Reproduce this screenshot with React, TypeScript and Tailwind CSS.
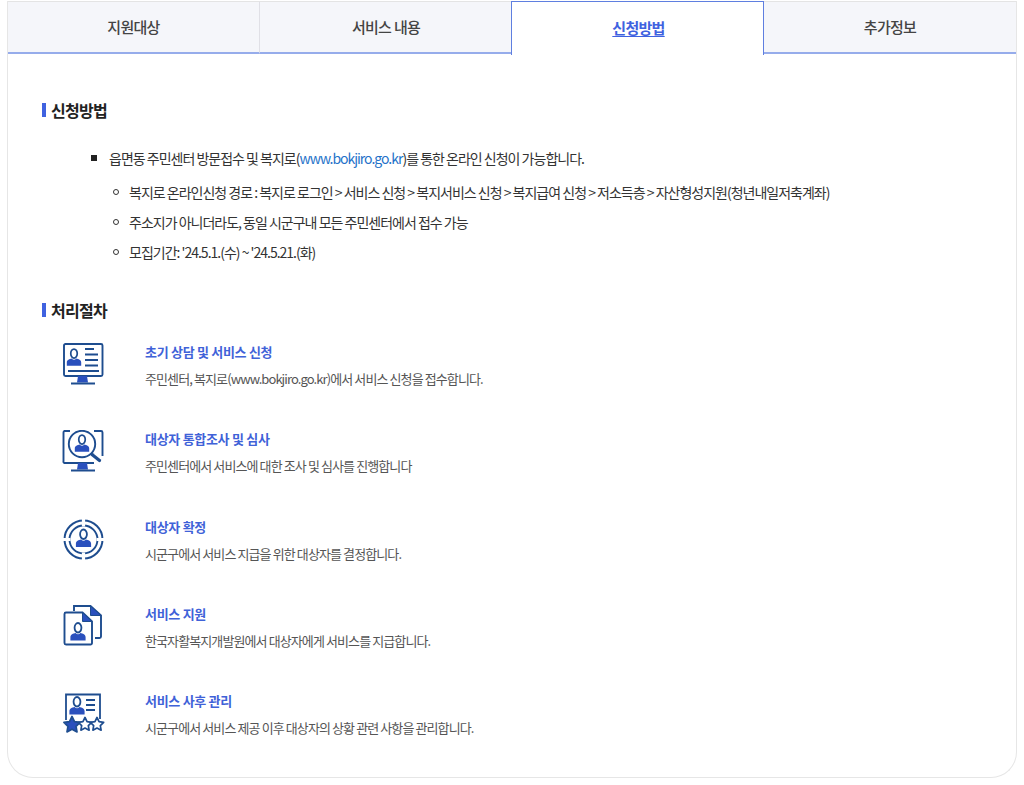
import React from "react";

const N = "#1e4d8f";
const B = "#2a50bd";

const Person = ({ x, y, s = 1 }: { x: number; y: number; s?: number }) => (
  <g transform={`translate(${x} ${y}) scale(${s})`}>
    <ellipse cx="0" cy="-5.5" rx="3.6" ry="5" fill="#fff" stroke={N} strokeWidth="1.9" />
    <path d="M-8 8 V4.5 C-8 1.5 -5 0.5 -2.5 0 C-1 1.8 1 1.8 2.5 0 C5 0.5 8 1.5 8 4.5 V8 Z" fill={B} />
  </g>
);

const Star = ({ x, y, r, fill }: { x: number; y: number; r: number; fill: string }) => {
  const pts: string[] = [];
  for (let i = 0; i < 10; i++) {
    const a = (-90 + i * 36) * (Math.PI / 180);
    const rr = i % 2 === 0 ? r : r * 0.5;
    pts.push(`${(x + rr * Math.cos(a)).toFixed(2)},${(y + rr * Math.sin(a)).toFixed(2)}`);
  }
  return <polygon points={pts.join(" ")} fill={fill} stroke={N} strokeWidth="1.7" strokeLinejoin="round" />;
};

const Stand = () => (
  <>
    <path d="M17 33H26L27 39.500H16Z" fill={B} />
    <path d="M10 40.500H34" stroke={N} strokeWidth="2" />
  </>
);

const Icon1 = () => (
  <svg width="46" height="46" viewBox="0 0 46 46" fill="none">
    <rect x="3" y="1" width="38.500" height="32" rx="1.500" stroke={N} strokeWidth="1.900" fill="#fff" />
    <Person x={13} y={15.500} s={0.9} />
    <path d="M24 6H33M24 11.500H37M24 17H37M24 22.500H37M7 28H38" stroke={N} strokeWidth="1.800" />
    <Stand />
  </svg>
);

const Icon2 = () => (
  <svg width="46" height="46" viewBox="0 0 46 46" fill="none">
    <path d="M9 1H3.500A1.500 1.500 0 0 0 2.500 2.500V31A1.500 1.500 0 0 0 3.500 33H33M33 1H40A1.500 1.500 0 0 1 41.500 2.500V26" stroke={N} strokeWidth="1.900" />
    <circle cx="21" cy="14" r="13.200" stroke={N} strokeWidth="1.900" fill="#fff" />
    <Person x={21} y={14.500} s={0.9} />
    <path d="M31 24.500L38.500 30.500" stroke={N} strokeWidth="3.200" strokeLinecap="round" />
    <Stand />
  </svg>
);

const Icon3 = () => (
  <svg width="46" height="46" viewBox="0 0 46 46" fill="none">
    <circle cx="22.500" cy="21.500" r="19" stroke={N} strokeWidth="2" />
    <circle cx="22.500" cy="21.500" r="14" stroke={N} strokeWidth="1.900" />
    <path d="M22.500 0V8.500M22.500 34.500V43M1 21.500H9.500M35.500 21.500H44" stroke="#fff" strokeWidth="3.200" />
    <Person x={22.500} y={21.500} s={0.95} />
  </svg>
);

const Icon4 = () => (
  <svg width="46" height="46" viewBox="0 0 46 46" fill="none">
    <path d="M13 6V1H29.500L40 10.500V31.500A1.500 1.500 0 0 1 38.500 33H34" stroke={N} strokeWidth="1.900" />
    <path d="M29.500 1L40 10.500H29.500Z" fill={B} stroke={N} strokeWidth="1" />
    <path d="M5 7.500H21.500L31 16.500V38A1.500 1.500 0 0 1 29.500 39.500H5A1.500 1.500 0 0 1 3.500 38V9A1.500 1.500 0 0 1 5 7.500Z" fill="#fff" stroke={N} strokeWidth="1.900" />
    <path d="M21.500 7.500L31 16.500H21.500Z" fill={B} stroke={N} strokeWidth="1" />
    <Person x={17} y={28} s={0.95} />
  </svg>
);

const Icon5 = () => (
  <svg width="46" height="46" viewBox="0 0 46 46" fill="none">
    <path d="M5 28V2.500H39V27" stroke={N} strokeWidth="1.800" />
    <Person x={16} y={15} s={0.95} />
    <path d="M25 8H34M25 13H34M25 18H34" stroke={N} strokeWidth="1.800" />
    <Star x={11} y={33} r={8.500} fill={B} />
    <Star x={24} y={32.500} r={7} fill="#fff" />
    <Star x={36} y={32.500} r={7} fill="#fff" />
  </svg>
);

const steps = [
  { icon: <Icon1 />, t: "초기 상담 및 서비스 신청", d: "주민센터, 복지로(www.bokjiro.go.kr)에서 서비스 신청을 접수합니다." },
  { icon: <Icon2 />, t: "대상자 통합조사 및 심사", d: "주민센터에서 서비스에 대한 조사 및 심사를 진행합니다" },
  { icon: <Icon3 />, t: "대상자 확정", d: "시군구에서 서비스 지급을 위한 대상자를 결정합니다." },
  { icon: <Icon4 />, t: "서비스 지원", d: "한국자활복지개발원에서 대상자에게 서비스를 지급합니다." },
  { icon: <Icon5 />, t: "서비스 사후 관리", d: "시군구에서 서비스 제공 이후 대상자의 상황 관련 사항을 관리합니다." },
];

const Heading = ({ children }: { children: React.ReactNode }) => (
  <div className="flex items-center h-6">
    <span className="w-[4px] h-[14px] bg-[#3f62e0] mr-[5px]" />
    <h3 className="text-[16px] font-bold text-[#222] tracking-[-0.75px]">{children}</h3>
  </div>
);

const Sub = ({ children }: { children: React.ReactNode }) => (
  <li className="flex items-center h-[30px]">
    <span className="w-[6px] h-[6px] rounded-full border border-[#333] mr-[10px] ml-[71px]" />
    <span>{children}</span>
  </li>
);

const Tab = ({ className, children }: { className: string; children: React.ReactNode }) => (
  <div className={`${className} h-[53px] flex items-center justify-center bg-[#f5f6fa] border-t border-t-[#e4e4e4] border-b-2 border-b-[#96aceb] text-[15px] font-medium text-[#444] tracking-[-0.7px]`}>
    {children}
  </div>
);

export default function App() {
  return (
    <div
      className="w-[1024px] h-[785px] bg-white pl-[7px] pt-px"
      style={{ fontFamily: '"Noto Sans CJK KR", "Noto Sans", sans-serif' }}
    >
      <div className="w-[1010px] h-[777px] border border-t-0 border-[#e6e6e6] rounded-b-[26px]">
        <div className="flex h-[53px] items-stretch">
          <Tab className="w-[252px] shrink-0 border-r border-r-[#e0e0e6]">지원대상</Tab>
          <Tab className="w-[251px] shrink-0 pl-px">서비스 내용</Tab>
          <div className="w-[253px] shrink-0 h-[54px] flex items-center justify-center bg-white border border-b-0 border-[#5f7fe0] pl-[2px] text-[15px] font-bold text-[#3f62e0] underline underline-offset-2 tracking-[-0.7px]">
            신청방법
          </div>
          <Tab className="flex-1">추가정보</Tab>
        </div>

        <div className="pl-[34px] pt-[44px]">
          <Heading>신청방법</Heading>
          <ul className="mt-[24px] text-[14px] text-[#333] tracking-[-1px]">
            <li className="flex items-center h-[24px] mb-[7px]">
              <span className="w-[6px] h-[6px] bg-[#222] ml-[49px] mr-[12px]" />
              <span>
                읍면동 주민센터 방문접수 및 복지로(<span className="text-[#1f73c9]">www.bokjiro.go.kr</span>)를 통한 온라인 신청이 가능합니다.
              </span>
            </li>
            <Sub>복지로 온라인신청 경로 : 복지로 로그인 &gt; 서비스 신청 &gt; 복지서비스 신청 &gt; 복지급여 신청 &gt; 저소득층 &gt; 자산형성지원(청년내일저축계좌)</Sub>
            <Sub>주소지가 아니더라도, 동일 시군구내 모든 주민센터에서 접수 가능</Sub>
            <Sub>모집기간: '24.5.1.(수) ~ '24.5.21.(화)</Sub>
          </ul>

          <div className="mt-[31px]">
            <Heading>처리절차</Heading>
          </div>

          <div className="mt-[21px]">
            {steps.map((s) => (
              <div key={s.t} className="flex h-[87.3px]">
                <div className="w-[103px] pl-[19px] shrink-0">{s.icon}</div>
                <div>
                  <div className="text-[13px] font-bold text-[#3f62d8] leading-[18px] tracking-[-0.3px]">{s.t}</div>
                  <div className="mt-[9px] text-[13px] text-[#555] leading-[18px] tracking-[-0.9px]">{s.d}</div>
                </div>
              </div>
            ))}
          </div>
        </div>
      </div>
    </div>
  );
}
